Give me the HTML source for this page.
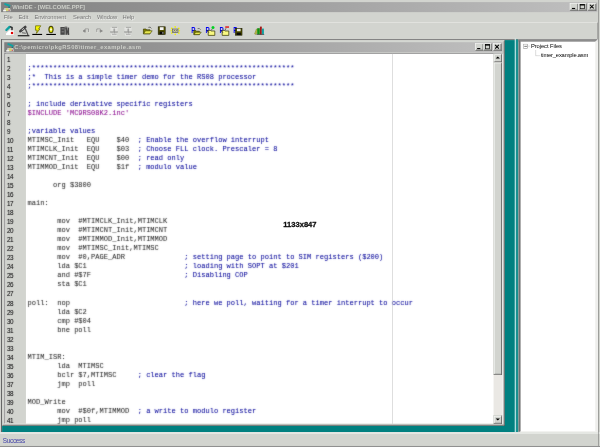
<!DOCTYPE html>
<html>
<head>
<meta charset="utf-8">
<title>WinIDE - [WELCOME.PPF]</title>
<style>
html,body{margin:0;padding:0;width:600px;height:447px;overflow:hidden;background:#d2d4cf;}
#root{position:absolute;left:0;top:0;width:1133px;height:847px;transform-origin:0 0;transform:scale(0.52957,0.52774);background:#d2d4cf;font-family:"Liberation Sans",sans-serif;font-size:11px;color:#000;overflow:hidden;filter:blur(0.01px);}
#root *{box-sizing:border-box;}
.abs{position:absolute;}
.titlebar{position:absolute;background:linear-gradient(to right,#808080,#c0c0c0);color:rgba(214,216,210,0.88);font-weight:bold;font-size:11px;line-height:18px;height:19px;white-space:nowrap;overflow:hidden;}
.titlebar .txt{position:absolute;top:0;}
.cbtn{position:absolute;width:16px;height:14px;background:#d2d4cf;border:1px solid;border-color:#fff #404040 #404040 #fff;box-shadow:inset -1px -1px 0 #808080;}
.cbtn svg{position:absolute;left:0;top:0;}
#menubar{position:absolute;left:2px;top:23px;width:1126px;height:19px;}
#menubar span{position:absolute;top:0;line-height:19px;color:#787878;text-shadow:1px 1px 0 rgba(255,255,255,0.55);letter-spacing:-0.2px;}
#toolbar{position:absolute;left:2px;top:42px;width:1127px;height:32px;border-top:1px solid #eeeeec;border-right:1px solid #808080;}
.ico{position:absolute;top:6px;width:18px;height:20px;}
#mdiT{position:absolute;left:2px;top:74px;width:977px;height:2px;background:linear-gradient(#808080 50%,#404040 50%);}
#mdiL{position:absolute;left:2px;top:74px;width:2px;height:745px;background:#606060;}
#tealR{position:absolute;left:952px;top:76px;width:27px;height:743px;background:#008080;}
#tealB{position:absolute;left:4px;top:798px;width:975px;height:21px;background:#008080;}
#child{position:absolute;left:4px;top:76px;width:949px;height:731px;background:#d2d4cf;border:1px solid;border-color:#d2d4cf #404040 #404040 #d2d4cf;box-shadow:inset 1px 1px 0 #dcdeda, inset -1px -1px 0 #808080;}
#editor{position:absolute;left:3px;top:23px;width:942px;height:703px;background:#fff;border:1px solid;border-color:#909090 #dcdcd8 #e8e8e4 #585858;box-shadow:inset 1px 0 0 #404040, inset 0 1px 0 #585858;}
#gutter{position:absolute;left:1px;top:1px;width:39px;height:701px;background:#d2d4cf;}
#nums{position:absolute;left:4px;top:3.9px;}
.n{height:17.09px;line-height:17.09px;font-size:12px;letter-spacing:-0.6px;color:#404040;text-shadow:0 0 2px rgba(64,64,64,0.8);}
#code{position:absolute;left:43px;top:2px;font-family:"Liberation Mono",monospace;font-size:13.34px;color:rgba(16,16,16,0.3);text-shadow:0 0 2.4px rgba(16,16,16,0.78);}
.l{height:17.09px;line-height:17.09px;white-space:pre;}
.gap{height:1.9px;}
.c{color:rgba(0,0,152,0.36);text-shadow:0 0 2.4px rgba(0,0,152,0.84);}
.m{color:rgba(136,0,140,0.36);text-shadow:0 0 2.4px rgba(136,0,140,0.84);}
#margin{position:absolute;left:732px;top:1px;width:1px;height:701px;background:#c0c0c0;}
#vscroll{position:absolute;left:923px;top:1px;width:16px;height:701px;background:#eae8e4;}
.sbtn{position:absolute;left:0;width:16px;height:16px;background:#d2d4cf;border:1px solid;border-color:#d2d4cf #404040 #404040 #d2d4cf;box-shadow:inset 1px 1px 0 #fff, inset -1px -1px 0 #808080;}
#thumb{position:absolute;left:0;top:16px;width:16px;height:592px;background:#d2d4cf;border:1px solid;border-color:#d2d4cf #404040 #404040 #d2d4cf;box-shadow:inset 1px 1px 0 #fff, inset -1px -1px 0 #808080;}
#wm{position:absolute;left:526px;top:315.5px;font-weight:bold;font-size:15px;line-height:18px;color:#101010;-webkit-text-stroke:0.6px #101010;white-space:nowrap;transform-origin:0 50%;transform:scaleX(0.95);filter:blur(0.9px);}
#splitter{position:absolute;left:972px;top:73px;width:2px;height:746px;background:#d8f4f4;}
#splitter2{position:absolute;left:974px;top:75px;width:5px;height:744px;background:#189090;}
#proj{position:absolute;left:979px;top:74px;width:150px;height:745px;background:#fff;border-style:solid;border-width:5px 5px 2px 4px;border-color:#8c8c8c #eeeeec #f0f0ee #707070;}
#proj .t{position:absolute;white-space:nowrap;font-size:11px;line-height:14px;color:#000;}
#status{position:absolute;left:0;top:819px;width:1133px;height:28px;background:#d2d4cf;border-top:3px solid #eaebe8;}
#frameR{position:absolute;left:1130px;top:0;width:1.4px;height:847px;background:#707070;}
#frameB{position:absolute;left:0;top:845px;width:1133px;height:2px;background:linear-gradient(#b0b0ae 50%,#909090 50%);}
#status span{position:absolute;left:5px;top:5.6px;font-size:12px;letter-spacing:-0.45px;line-height:15px;color:#4040a8;}
</style>
</head>
<body>
<div id="root">
  <div class="titlebar" style="left:2px;top:4px;width:1126px;">
    <svg class="abs" style="left:1.5px;top:0px" width="18" height="19" viewBox="0 0 17 18" preserveAspectRatio="none"><path d="M1.5 16.5 L4 10.5 L14 10.5 L16 16.5 Z" fill="#c8c8c4"/><rect x="6.5" y="11" width="4.5" height="4.5" fill="#d8d860"/><rect x="2" y="14" width="5" height="2.5" fill="#f4f4f0"/><rect x="11.5" y="13.5" width="2" height="2" fill="#d04040"/><path d="M5.5 3.5 L13 6.5" stroke="#10a4a4" stroke-width="3.6" stroke-linecap="round" fill="none"/><path d="M12.5 8 L12.5 10.5" stroke="#207070" stroke-width="2.4" fill="none"/></svg>
    <span class="txt" style="left:21px;">WinIDE - [WELCOME.PPF]</span>
    <div class="cbtn" style="left:1074px;top:2px;"><svg width="14" height="12"><rect x="3" y="8" width="6" height="2" fill="#000"/></svg></div>
    <div class="cbtn" style="left:1090px;top:2px;"><svg width="14" height="12"><rect x="2.5" y="1.5" width="8" height="8" fill="none" stroke="#000" stroke-width="1.3"/><rect x="2" y="1" width="9" height="2.4" fill="#000"/></svg></div>
    <div class="cbtn" style="left:1108px;top:2px;"><svg width="14" height="12"><path d="M3 2 L10 9 M10 2 L3 9" stroke="#000" stroke-width="2" fill="none"/></svg></div>
  </div>
  <div id="menubar">
    <span style="left:5px">File</span>
    <span style="left:33px">Edit</span>
    <span style="left:63px">Environment</span>
    <span style="left:136px">Search</span>
    <span style="left:181px">Window</span>
    <span style="left:229.5px">Help</span>
  </div>
  <div id="toolbar">
    <!--ICONS-->
  </div>
  <div id="mdiT"></div><div id="mdiL"></div><div id="tealR"></div><div id="tealB"></div>
  <div id="splitter2"></div><div id="splitter"></div>
  <div id="child">
    <div class="titlebar" style="left:3px;top:3px;width:941px;">
      <svg class="abs" style="left:1.5px;top:0px" width="18" height="19" viewBox="0 0 17 18" preserveAspectRatio="none"><path d="M1.5 16.5 L4 10.5 L14 10.5 L16 16.5 Z" fill="#c8c8c4"/><rect x="6.5" y="11" width="4.5" height="4.5" fill="#d8d860"/><rect x="2" y="14" width="5" height="2.5" fill="#f4f4f0"/><rect x="11.5" y="13.5" width="2" height="2" fill="#d04040"/><path d="M5.5 3.5 L13 6.5" stroke="#10a4a4" stroke-width="3.6" stroke-linecap="round" fill="none"/><path d="M12.5 8 L12.5 10.5" stroke="#207070" stroke-width="2.4" fill="none"/></svg>
      <span class="txt" style="left:19px;letter-spacing:0.75px">C:\pemicro\pkgRS08\timer_example.asm</span>
      <div class="cbtn" style="left:889px;top:2px;"><svg width="14" height="12"><rect x="3" y="8" width="6" height="2" fill="#000"/></svg></div>
      <div class="cbtn" style="left:905px;top:2px;"><svg width="14" height="12"><rect x="2.5" y="1.5" width="8" height="8" fill="none" stroke="#000" stroke-width="1.3"/><rect x="2" y="1" width="9" height="2.4" fill="#000"/></svg></div>
      <div class="cbtn" style="left:923px;top:2px;"><svg width="14" height="12"><path d="M3 2 L10 9 M10 2 L3 9" stroke="#000" stroke-width="2" fill="none"/></svg></div>
    </div>
    <div id="editor">
      <div id="gutter"></div>
      <div id="nums">
<div class="n">1</div>
<div class="n">2</div>
<div class="n">3</div>
<div class="n">4</div>
<div class="n">5</div>
<div class="n">6</div>
<div class="n">7</div>
<div class="n">8</div>
<div class="n">9</div>
<div class="n">10</div>
<div class="n">11</div>
<div class="n">12</div>
<div class="n">13</div>
<div class="n">14</div>
<div class="n">15</div>
<div class="n">16</div>
<div class="n">17</div>
<div class="n">18</div>
<div class="n">19</div>
<div class="n">20</div>
<div class="n">21</div>
<div class="n">22</div>
<div class="n">23</div>
<div class="n">24</div>
<div class="n">25</div>
<div class="n">26</div>
<div class="n">27</div>
<div class="gap"></div>
<div class="n">28</div>
<div class="n">29</div>
<div class="n">30</div>
<div class="n">31</div>
<div class="n">32</div>
<div class="n">33</div>
<div class="n">34</div>
<div class="n">35</div>
<div class="n">36</div>
<div class="n">37</div>
<div class="n">38</div>
<div class="n">39</div>
<div class="n">40</div>
<div class="n">41</div>
      </div>
      <div id="code">
<div class="l">&nbsp;</div>
<div class="l c">;**************************************************************</div>
<div class="l c">;*  This is a simple timer demo for the RS08 processor</div>
<div class="l c">;**************************************************************</div>
<div class="l">&nbsp;</div>
<div class="l c">; include derivative specific registers</div>
<div class="l m">$INCLUDE 'MC9RS08K2.inc'</div>
<div class="l">&nbsp;</div>
<div class="l c">;variable values</div>
<div class="l">MTIMSC_Init   EQU    $40  <span class="c">; Enable the overflow interrupt</span></div>
<div class="l">MTIMCLK_Init  EQU    $03  <span class="c">; Choose FLL clock. Prescaler = 8</span></div>
<div class="l">MTIMCNT_Init  EQU    $00  <span class="c">; read only</span></div>
<div class="l">MTIMMOD_Init  EQU    $1f  <span class="c">; modulo value</span></div>
<div class="l">&nbsp;</div>
<div class="l">      org $3800</div>
<div class="l">&nbsp;</div>
<div class="l">main:</div>
<div class="l">&nbsp;</div>
<div class="l">       mov  #MTIMCLK_Init,MTIMCLK</div>
<div class="l">       mov  #MTIMCNT_Init,MTIMCNT</div>
<div class="l">       mov  #MTIMMOD_Init,MTIMMOD</div>
<div class="l">       mov  #MTIMSC_Init,MTIMSC</div>
<div class="l">       mov  #0,PAGE_ADR              <span class="c">; setting page to point to SIM registers ($200)</span></div>
<div class="l">       lda $C1                       <span class="c">; loading with SOPT at $201</span></div>
<div class="l">       and #$7F                      <span class="c">; Disabling COP</span></div>
<div class="l">       sta $C1</div>
<div class="l">&nbsp;</div>
<div class="gap"></div>
<div class="l">poll:  nop                           <span class="c">; here we poll, waiting for a timer interrupt to occur</span></div>
<div class="l">       lda $C2</div>
<div class="l">       cmp #$04</div>
<div class="l">       bne poll</div>
<div class="l">&nbsp;</div>
<div class="l">&nbsp;</div>
<div class="l">MTIM_ISR:</div>
<div class="l">       lda  MTIMSC</div>
<div class="l">       bclr $7,MTIMSC     <span class="c">; clear the flag</span></div>
<div class="l">       jmp  poll</div>
<div class="l">&nbsp;</div>
<div class="l">MOD_Write</div>
<div class="l">       mov  #$0f,MTIMMOD  <span class="c">; a write to modulo register</span></div>
<div class="l">       jmp poll</div>
      </div>
      <div id="margin"></div>
      <div id="wm">1133x847</div>
      <div id="vscroll">
        <div class="sbtn" style="top:0"><svg width="14" height="14"><path d="M3 8 L7 4 L11 8 Z" fill="#000"/></svg></div>
        <div id="thumb"></div>
        <div class="sbtn" style="bottom:0"><svg width="14" height="14"><path d="M3 5 L7 9 L11 5 Z" fill="#000"/></svg></div>
      </div>
    </div>
  </div>
  <div id="proj">
    <svg class="abs" style="left:5px;top:4px" width="40" height="30"><rect x="0.5" y="0.5" width="8" height="8" fill="#fff" stroke="#808080"/><rect x="2" y="4" width="5" height="1" fill="#000"/><path d="M23.5 12 V22.5 H32" stroke="#808080" fill="none" stroke-dasharray="1,1"/><path d="M9 4.5 H13" stroke="#808080" fill="none" stroke-dasharray="1,1"/></svg>
    <span class="t" style="left:19.5px;top:1px;letter-spacing:-0.15px">Project Files</span>
    <span class="t" style="left:38.5px;top:17.5px;letter-spacing:-0.4px">timer_example.asm</span>
  </div>
  <svg id="icons" style="position:absolute;left:0;top:0;width:1133px;height:847px;overflow:visible" viewBox="0 0 600 447" preserveAspectRatio="none">
  <!-- 1 app icon -->
  <g>
    <path d="M6 33.6 L9.5 30.2 L13.6 30.2 L13.6 35 L6 35 Z" fill="#ffffff"/>
    <path d="M6.4 30 L9.6 26.9" stroke="#10a0a0" stroke-width="2.4" stroke-linecap="round" fill="none"/>
    <path d="M10.6 26.9 L12 27.6 L12 29.6" stroke="#303030" stroke-width="1.6" fill="none" stroke-linecap="round"/>
    <circle cx="12" cy="33" r="1.25" fill="#e00000"/>
  </g>
  <!-- 2 microscope -->
  <g>
    <path d="M20.3 31.2 L25.3 27" stroke="#404040" stroke-width="2.6" stroke-linecap="round" fill="none"/>
    <path d="M21.8 30 L24 28.2" stroke="#d0d0d0" stroke-width="0.9" fill="none"/>
    <path d="M25.2 28.4 L28 35" stroke="#505050" stroke-width="1.3" fill="none"/>
    <path d="M22 32.8 L25.8 33.2" stroke="#606060" stroke-width="1" fill="none"/>
    <rect x="17.8" y="35.2" width="11.6" height="1.1" fill="#101010"/>
  </g>
  <!-- 3 lightning -->
  <g>
    <path d="M35.6 25.8 L40.8 25.8 L38.6 29 L39.8 29 L36.4 33.4 L37.2 30.2 L35.4 30.2 Z" fill="#f4f400" stroke="#606000" stroke-width="0.7" stroke-linejoin="round"/>
    <rect x="32.3" y="33.9" width="9.8" height="1.1" fill="#000"/>
  </g>
  <!-- 4 watch -->
  <g>
    <ellipse cx="51" cy="29.5" rx="2.1" ry="3.2" fill="#e0e000" stroke="#404000" stroke-width="1"/>
    <ellipse cx="51" cy="29.5" rx="0.9" ry="1.3" fill="#ffffe8"/>
    <rect x="46.3" y="33.9" width="9.6" height="1.1" fill="#000"/>
  </g>
  <!-- 5 chip -->
  <g fill="#484848">
    <rect x="60.4" y="27" width="4.4" height="7.8"/>
    <rect x="65.4" y="27.6" width="1.7" height="7.2"/>
    <rect x="67.5" y="27.6" width="1.6" height="7.2"/>
    <path d="M65.8 28 L68.8 34.6" stroke="#484848" stroke-width="1.4"/>
    <rect x="61.6" y="28.4" width="2.2" height="0.9" fill="#909090"/>
    <rect x="61.6" y="31.4" width="2.2" height="0.9" fill="#909090"/>
    <rect x="64.6" y="26.6" width="2.6" height="1.2" fill="#606060"/>
  </g>
  <!-- 6 undo, 7 redo (disabled) -->
  <g fill="none" stroke="#ffffff" stroke-width="0.8" opacity="0.7" transform="translate(0.5,0.5)">
    <path d="M85 29 L88.6 29 L88.6 32"/>
    <path d="M100.4 29 L96.8 29 L96.8 32"/>
  </g>
  <g fill="none" stroke="#8a8a88" stroke-width="0.8">
    <path d="M85 29 L88.6 29 L88.6 32"/>
    <path d="M85.2 29.6 L83 31 L85.2 32.2 Z" fill="#808080"/>
    <path d="M100.4 29 L96.8 29 L96.8 32"/>
    <path d="M100.2 29.6 L102.4 31 L100.2 32.2 Z" fill="#808080"/>
  </g>
  <!-- 8, 9 indent (disabled) -->
  <g stroke="#ffffff" stroke-width="0.7" fill="none" opacity="0.85">
    <path d="M110.4 28.2 H117.6 M110.4 30 H113 M115.4 30 H117.6 M110.4 33.6 H117.6 M111 35 H117"/>
    <path d="M124.4 28.2 H131.6 M124.4 30 H127 M129.4 30 H131.6 M124.4 33.6 H131.6 M125 35 H131"/>
  </g>
  <g stroke="#a0a09e" stroke-width="0.8" fill="none">
    <path d="M112 27.4 H117 M110 31.8 H118 M110.4 32.8 H113 M115 32.8 H117.6 M112 34.3 H116.6"/>
    <path d="M126 27.4 H131 M124 31.8 H132 M124.4 32.8 H127 M129 32.8 H131.6 M126 34.3 H130.6"/>
  </g>
  <g stroke="#909090" stroke-width="1" fill="none">
    <path d="M114.2 28.6 V33.4 M128.2 28.6 V33.4"/>
  </g>
  <!-- 10 open folder -->
  <g>
    <path d="M143.4 29 L146 29 L146.8 29.8 L150 29.8 L150 33.8 L143.4 33.8 Z" fill="#808000" stroke="#303000" stroke-width="0.6"/>
    <path d="M143.6 33.8 L145.4 30.8 L152.2 30.8 L150 33.8 Z" fill="#e8e850" stroke="#404000" stroke-width="0.6"/>
    <path d="M148.4 27.4 Q150.4 26.4 151.4 28.4" stroke="#404040" stroke-width="0.7" fill="none"/>
  </g>
  <!-- 11 floppy -->
  <g>
    <rect x="158.2" y="26.8" width="7" height="7.6" fill="#505000" stroke="#181800" stroke-width="0.6"/>
    <rect x="159.8" y="27.2" width="3.8" height="2.8" fill="#f4f4f4"/>
    <rect x="159.6" y="31.6" width="4.2" height="2.6" fill="#080808"/>
    <rect x="162.4" y="32" width="1" height="1.8" fill="#b0b0b0"/>
  </g>
  <!-- 12 gear -->
  <g>
    <g fill="#f0f000">
      <circle cx="175.2" cy="26.9" r="0.85"/><circle cx="175.2" cy="34.3" r="0.85"/>
      <circle cx="171.7" cy="28.4" r="0.85"/><circle cx="178.8" cy="28.4" r="0.85"/>
      <circle cx="171.7" cy="33" r="0.85"/><circle cx="178.8" cy="33" r="0.85"/>
      <circle cx="171.2" cy="30.7" r="0.8"/><circle cx="179.3" cy="30.7" r="0.8"/>
    </g>
    <rect x="172.6" y="29" width="5.4" height="3.4" fill="#c0c0a0" stroke="#606060" stroke-width="0.7"/>
    <path d="M173.6 31.4 L175 30 M175.8 31.4 L177.2 30" stroke="#404040" stroke-width="0.6"/>
  </g>
  <!-- 13..16 P icons -->
  <g>
    <g font-family="'Liberation Sans',sans-serif" font-weight="bold" font-size="8.8" fill="#0000f0">
      <text transform="translate(191.3,32.6) scale(0.72,1)">P</text><text transform="translate(205.4,32.6) scale(0.72,1)">P</text><text transform="translate(219.4,32.6) scale(0.72,1)">P</text><text transform="translate(233.3,32.6) scale(0.72,1)">P</text>
    </g>
    <!-- 13 -->
    <path d="M193.8 30.6 L196 30.6 L196.6 31.2 L199.4 31.2 L199.4 34.6 L193.8 34.6 Z" fill="#808000" stroke="#303000" stroke-width="0.6"/>
    <path d="M194 34.6 L195.6 32.2 L201.2 32.2 L199.4 34.6 Z" fill="#e8e850" stroke="#404000" stroke-width="0.6"/>
    <path d="M197.6 28.6 Q199.6 27.8 200.6 29.8" stroke="#505050" stroke-width="0.7" fill="none"/>
    <!-- 14 -->
    <path d="M208.2 30.4 L210.4 30.4 L211 31 L214.8 31 L214.8 35.4 L208.2 35.4 Z" fill="#f8f880" stroke="#303000" stroke-width="0.7"/>
    <path d="M206.8 30.4 L208.8 32.6" stroke="#202020" stroke-width="0.8"/>
    <circle cx="213" cy="27.6" r="1.5" fill="#00d020"/>
    <path d="M212.2 29 L211 30.6" stroke="#202020" stroke-width="0.6"/>
    <!-- 15 -->
    <path d="M222.2 30.4 L224.4 30.4 L225 31 L228.8 31 L228.8 35.4 L222.2 35.4 Z" fill="#f8f880" stroke="#303000" stroke-width="0.7"/>
    <path d="M220.8 30.4 L222.8 32.6" stroke="#202020" stroke-width="0.8"/>
    <rect x="225.2" y="26.3" width="3.8" height="1.5" fill="#e02020"/>
    <path d="M226 28.2 L225 30.4" stroke="#202020" stroke-width="0.6"/>
    <!-- 16 -->
    <rect x="235.4" y="28.4" width="6.6" height="6.8" fill="#505000" stroke="#181800" stroke-width="0.6"/>
    <rect x="237" y="28.8" width="3.6" height="2.4" fill="#e8e8e8"/>
    <rect x="236.6" y="32.6" width="4.2" height="2.4" fill="#080808"/>
  </g>
  <!-- 17 books -->
  <g>
    <path d="M254.6 34 L256.4 29 L257.6 29.4 L256.2 34.4 Z" fill="#c8c840" stroke="#606020" stroke-width="0.4"/>
    <rect x="257.2" y="28.2" width="2.6" height="6.2" fill="#109010"/>
    <rect x="259.9" y="26.6" width="1.9" height="7.9" fill="#a01818"/>
    <rect x="261.9" y="28.6" width="2" height="5.8" fill="#10a0a0"/>
    <rect x="256.6" y="34.1" width="7.6" height="0.6" fill="#303030"/>
  </g>
</svg>

  <div id="status"><span>Success</span></div>
  <div id="frameR"></div><div id="frameB"></div>
</div>
</body>
</html>
